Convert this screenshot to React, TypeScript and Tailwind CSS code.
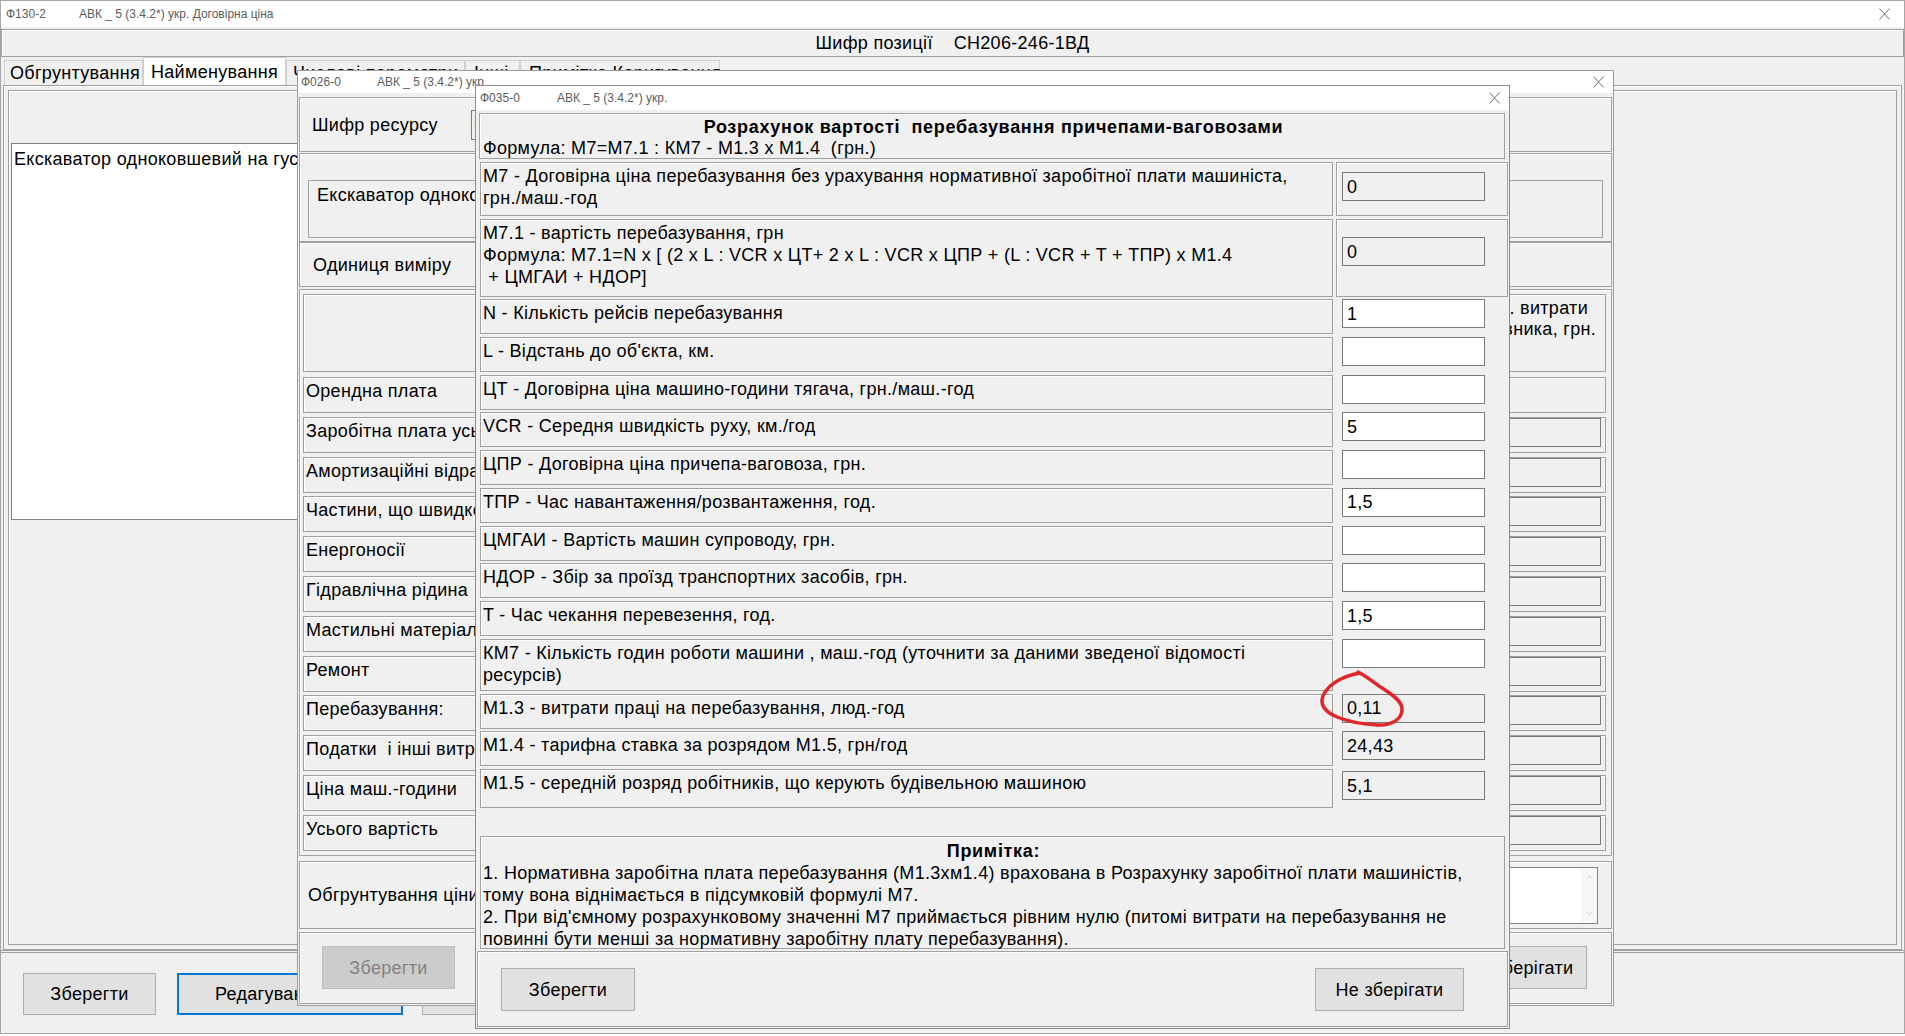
import React from "react";
import { ChevronUp, ChevronDown } from "lucide-react";

const box = "border border-[#a0a0a0] shadow-[inset_1px_1px_0_#ffffff]";
const btn =
  "flex items-center justify-center bg-[#e1e1e1] border border-[#adadad] text-black";
const inputBase = "h-[29px] flex items-center pl-[4px] border border-[#7a7a7a] whitespace-nowrap overflow-hidden";

function CloseX({ className = "" }: { className?: string }) {
  return (
    <svg width="11" height="12" viewBox="0 0 11 12" className={className} fill="none">
      <path d="M0.5 0.5 L10.5 11.5 M10.5 0.5 L0.5 11.5" stroke="#707070" strokeWidth="1" />
    </svg>
  );
}

const rows026: [string, boolean][] = [
  ["Орендна плата", false],
  ["Заробітна плата усього машиністів", true],
  ["Амортизаційні відрахування", true],
  ["Частини, що швидкозношуються", true],
  ["Енергоносії", true],
  ["Гідравлічна рідина", true],
  ["Мастильні матеріали", true],
  ["Ремонт", true],
  ["Перебазування:", true],
  ["Податки  і інші витрати", true],
  ["Ціна маш.-години", true],
  ["Усього вартість", true],
];

const singleRows: { label: string; value: string }[] = [
  { label: "N - Кількість рейсів перебазування", value: "1" },
  { label: "L - Відстань до об'єкта, км.", value: "" },
  { label: "ЦТ - Договірна ціна машино-години тягача, грн./маш.-год", value: "" },
  { label: "VCR - Середня швидкість руху, км./год", value: "5" },
  { label: "ЦПР - Договірна ціна причепа-ваговоза, грн.", value: "" },
  { label: "ТПР - Час навантаження/розвантаження, год.", value: "1,5" },
  { label: "ЦМГАИ - Вартість машин супроводу, грн.", value: "" },
  { label: "НДОР - Збір за проїзд транспортних засобів, грн.", value: "" },
  { label: "T - Час чекання перевезення, год.", value: "1,5" },
];

function Window026() {
  return (
    <div className="absolute left-[297px] top-[70px] w-[1317px] h-[936px] flex flex-col bg-[#f0f0f0] border border-[#9c9c9c]">
      <div className="flex items-center h-[22px] shrink-0 bg-white pl-[3px] pr-[9px] text-[12px] leading-[14px] tracking-normal text-[#5c5c5c]">
        <span className="w-[76px]">Ф026-0</span>
        <span>АВК _ 5 (3.4.2*) укр</span>
        <CloseX className="ml-auto" />
      </div>
      <div className="flex flex-col px-[1px]">
        <div className={`mt-[4px] h-[55px] flex items-center ${box}`}>
          <span className="w-[171px] pl-[12px] whitespace-nowrap overflow-hidden">Шифр ресурсу</span>
          <div className="w-[400px] h-[30px] bg-[#f0f0f0] border border-[#7a7a7a] flex items-center pl-[2px]">(</div>
        </div>
        <div className={`mt-[1px] h-[89px] pt-[26px] pl-[8px] pr-[8px] ${box}`}>
          <div className="h-[58px] border border-[#a0a0a0] pl-[8px] pt-[3px]">
            <div className="w-[158px] overflow-hidden whitespace-nowrap">Екскаватор одноковшевий на гусеничному ходу</div>
          </div>
        </div>
        <div className={`h-[45px] flex items-center pl-[13px] ${box}`}>
          <span className="w-[160px] overflow-hidden whitespace-nowrap">Одиниця виміру</span>
        </div>
        <div className={`mt-[2px] h-[567px] flex flex-col gap-[3.8px] pt-[4px] pl-[3px] pr-[5px] ${box}`}>
          <div className={`h-[78px] mb-[1.2px] flex justify-end ${box}`}>
            <div className="flex flex-col items-end pt-[3px] leading-[21px] whitespace-nowrap">
              <span className="pr-[17px]">Експл. витрати</span>
              <span className="pr-[9px]">виконавника, грн.</span>
            </div>
          </div>
          {rows026.map(([label, hasInput]) => (
            <div key={label} className={`h-[36px] flex items-start justify-between ${box}`}>
              <span className="w-[172px] pl-[2px] pt-[2px] whitespace-pre overflow-hidden">{label}</span>
              {hasInput && (
                <div className="mr-[4px] w-[145px] h-[29px] bg-[#f0f0f0] border border-[#7a7a7a]" />
              )}
            </div>
          ))}
        </div>
        <div className={`mt-[5px] h-[68px] flex items-center justify-between pl-[8px] pr-[13px] ${box}`}>
          <span className="w-[168px] overflow-hidden whitespace-nowrap">Обгрунтування ціни</span>
          <div className="w-[146px] h-[57px] bg-white border border-[#828282] flex justify-end">
            <div className="w-[16px] flex flex-col items-center justify-between py-[4px] bg-[#f7f7f7]">
              <ChevronUp size={11} color="#bdbdbd" strokeWidth={1.5} />
              <ChevronDown size={11} color="#bdbdbd" strokeWidth={1.5} />
            </div>
          </div>
        </div>
        <div className={`mt-[3px] h-[72px] flex items-start justify-between pt-[13px] pl-[22px] pr-[24px] ${box}`}>
          <div className="w-[133px] h-[43px] flex items-center justify-center bg-[#cccccc] border border-[#bfbfbf] text-[#838383]">
            Зберегти
          </div>
          <div className={`w-[135px] h-[43px] ${btn}`}>Не зберігати</div>
        </div>
      </div>
    </div>
  );
}

function Window035() {
  return (
    <div className="absolute left-[475px] top-[85px] w-[1035px] h-[944px] flex flex-col bg-[#f0f0f0] border border-[#8c8c8c]">
      <div className="flex items-center h-[24px] shrink-0 bg-white pl-[4px] pr-[9px] text-[12px] leading-[14px] tracking-normal text-[#5c5c5c]">
        <span className="w-[77px]">Ф035-0</span>
        <span>АВК _ 5 (3.4.2*) укр.</span>
        <CloseX className="ml-auto" />
      </div>
      <div className={`mt-[3px] ml-[3px] mr-[4px] h-[46px] pt-[3px] pl-[3px] leading-[21px] ${box}`}>
        <div className="text-center font-bold tracking-[0.7px] whitespace-pre">Розрахунок вартості  перебазування причепами-ваговозами</div>
        <div className="whitespace-pre">Формула: M7=M7.1 : КМ7 - М1.3 х М1.4  (грн.)</div>
      </div>
      <div className="flex flex-col ml-[4px] mr-[1px]">
        <div className="mt-[3px] flex gap-[3px]">
          <div className={`w-[853px] h-[54px] pl-[2px] pt-[2px] whitespace-nowrap ${box}`}>
            M7 - Договірна ціна перебазування без урахування нормативної заробітної плати машиніста,
            <br />
            грн./маш.-год
          </div>
          <div className={`flex-1 h-[54px] pt-[9px] pl-[5px] ${box}`}>
            <div className={`w-[143px] bg-[#f0f0f0] ${inputBase}`}>0</div>
          </div>
        </div>
        <div className="mt-[3px] flex gap-[3px]">
          <div className={`w-[853px] h-[78px] pl-[2px] pt-[2px] whitespace-nowrap ${box}`}>
            M7.1 - вартість перебазування, грн
            <br />
            Формула: M7.1=N x [ (2 x L : VCR x ЦТ+ 2 x L : VCR x ЦПР + (L : VCR + T + ТПР) x M1.4
            <br />
            &nbsp;+ ЦМГАИ + НДОР]
          </div>
          <div className={`flex-1 h-[78px] pt-[17px] pl-[5px] ${box}`}>
            <div className={`w-[143px] bg-[#f0f0f0] ${inputBase}`}>0</div>
          </div>
        </div>
        {singleRows.map((r, i) => (
          <div key={r.label} className={`flex gap-[3px] ${i === 0 ? "mt-[2px]" : "mt-[2.75px]"}`}>
            <div className={`w-[853px] h-[35px] pl-[2px] pt-[2px] whitespace-nowrap ${box}`}>{r.label}</div>
            <div className="flex-1 pl-[6px]">
              <div className={`w-[143px] bg-white ${inputBase}`}>{r.value}</div>
            </div>
          </div>
        ))}
        <div className="mt-[2.75px] flex gap-[3px]">
          <div className={`w-[853px] h-[52px] pl-[2px] pt-[2px] whitespace-nowrap ${box}`}>
            КМ7 - Кількість годин роботи машини , маш.-год (уточнити за даними зведеної відомості
            <br />
            ресурсів)
          </div>
          <div className="flex-1 pl-[6px]">
            <div className={`w-[143px] bg-white ${inputBase}`} />
          </div>
        </div>
        <div className="mt-[2.75px] flex gap-[3px]">
          <div className={`w-[853px] h-[35px] pl-[2px] pt-[2px] whitespace-nowrap ${box}`}>
            М1.3 - витрати праці на перебазування, люд.-год
          </div>
          <div className="flex-1 pl-[6px]">
            <div className={`w-[143px] bg-[#f0f0f0] ${inputBase}`}>0,11</div>
          </div>
        </div>
        <div className="mt-[2.75px] flex gap-[3px]">
          <div className={`w-[853px] h-[35px] pl-[2px] pt-[2px] whitespace-nowrap ${box}`}>
            М1.4 - тарифна ставка за розрядом М1.5, грн/год
          </div>
          <div className="flex-1 pl-[6px]">
            <div className={`w-[143px] bg-[#f0f0f0] ${inputBase}`}>24,43</div>
          </div>
        </div>
        <div className="mt-[2.75px] flex gap-[3px]">
          <div className={`w-[853px] h-[39px] pl-[2px] pt-[2px] whitespace-nowrap ${box}`}>
            М1.5 - середній розряд робітників, що керують будівельною машиною
          </div>
          <div className="flex-1 pl-[6px] pt-[2px]">
            <div className={`w-[143px] bg-[#f0f0f0] ${inputBase}`}>5,1</div>
          </div>
        </div>
      </div>
      <div className={`mt-[28px] ml-[4px] mr-[4px] h-[113px] pt-[3px] pl-[2px] whitespace-nowrap ${box}`}>
        <div className="text-center font-bold tracking-[0.7px]">Примітка:</div>
        <div>1. Нормативна заробітна плата перебазування (М1.3хм1.4) врахована в Розрахунку заробітної плати машиністів,</div>
        <div>тому вона віднімається в підсумковій формулі М7.</div>
        <div>2. При від'ємному розрахунковому значенні М7 приймається рівним нулю (питомі витрати на перебазування не</div>
        <div>повинні бути менші за нормативну заробітну плату перебазування).</div>
      </div>
      <div className={`mt-[2px] ml-[1px] mr-[1px] h-[76px] flex items-start justify-between pt-[16px] pl-[23px] pr-[43px] ${box}`}>
        <div className={`w-[134px] h-[43px] ${btn}`}>Зберегти</div>
        <div className={`w-[149px] h-[43px] ${btn}`}>Не зберігати</div>
      </div>
    </div>
  );
}

export default function App() {
  return (
    <div className="relative w-[1905px] h-[1036px] overflow-hidden bg-white text-black text-[18px] leading-[22px] tracking-[0.3px] font-['Liberation_Sans',Arial,sans-serif]">
      <div className="flex flex-col h-[1034px] border border-[#a6a6a6] bg-[#f0f0f0]">
        <div className="flex items-center h-[26px] shrink-0 bg-white pl-[5px] pr-[14px] text-[12px] leading-[14px] tracking-normal text-[#5c5c5c]">
          <span className="w-[73px]">Ф130-2</span>
          <span>АВК _ 5 (3.4.2*) укр. Договірна ціна</span>
          <CloseX className="ml-auto" />
        </div>
        <div className={`mt-[2px] h-[28px] shrink-0 flex items-center justify-center gap-[21px] ${box}`}>
          <span>Шифр позиції</span>
          <span>СН206-246-1ВД</span>
        </div>
        <div className="flex items-end h-[28px] shrink-0 pl-[3px]">
          <div className="h-[25px] w-[139px] pl-[5px] border border-b-0 border-[#d0d0d0] flex items-center whitespace-nowrap">Обгрунтування</div>
          <div className="h-[28px] w-[143px] pl-[7px] bg-white border border-b-0 border-[#d0d0d0] flex items-center whitespace-nowrap">Найменування</div>
          <div className="h-[25px] w-[179px] pl-[6px] border border-b-0 border-[#d0d0d0] flex items-center whitespace-nowrap">Числові параметри</div>
          <div className="h-[25px] w-[55px] pl-[8px] border border-b-0 border-[#d0d0d0] flex items-center whitespace-nowrap">Інші</div>
          <div className="h-[25px] w-[200px] pl-[8px] border border-b-0 border-[#d0d0d0] flex items-center whitespace-nowrap">Примітка Коригування</div>
        </div>
        <div className={`flex-1 mx-[2px] p-[4px] ${box}`}>
          <div className={`h-full pt-[52px] pl-[2px] ${box}`}>
            <div className="w-[700px] h-[377px] bg-white border border-[#828282] pl-[2px] pt-[4px]">
              <div className="w-[284px] overflow-hidden whitespace-nowrap">Екскаватор одноковшевий на гусеничному ходу</div>
            </div>
          </div>
        </div>
        <div className="h-[83px] shrink-0 border-t-[3px] border-double border-[#a0a0a0] flex items-start gap-[21px] pt-[20px] pl-[22px]">
          <div className={`w-[133px] h-[42px] ${btn}`}>Зберегти</div>
          <div className="w-[226px] h-[42px] flex items-center justify-center bg-[#e1e1e1] border-2 border-[#0078d7] whitespace-nowrap">Редагування ціни</div>
          <div className={`w-[200px] h-[42px] -ml-[2px] ${btn}`} />
        </div>
      </div>

      <Window026 />
      <Window035 />

      <svg className="absolute left-[1315px] top-[668px]" width="95" height="64" viewBox="0 0 95 64" fill="none">
        <path
          d="M45 5 C 27 8, 9 18, 7 32 C 6 46, 30 55, 62 57 C 78 58, 88 50, 87 40 C 86 32, 75 25, 67 20 C 59 15, 53 9, 43 4"
          stroke="#e0262b"
          strokeWidth="3.5"
          strokeLinecap="round"
        />
      </svg>
    </div>
  );
}
